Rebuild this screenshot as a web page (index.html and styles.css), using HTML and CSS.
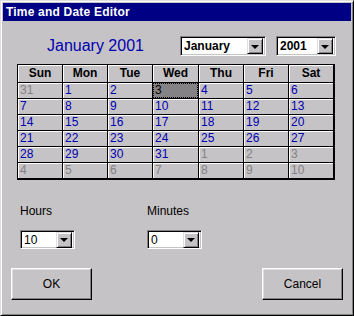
FILE: index.html
```html
<!DOCTYPE html>
<html>
<head>
<meta charset="utf-8">
<link rel="stylesheet" href="styles.css">
</head>
<body>
<div class="window">
  <div class="titlebar">Time and Date Editor</div>
  <div class="content">
    <div class="head-row">
      <div class="heading">January 2001</div>
      <div class="combo combo-month bold"><span class="combo-text">January</span><span class="combo-btn"><span class="arrow"></span></span></div>
      <div class="combo combo-year bold"><span class="combo-text">2001</span><span class="combo-btn"><span class="arrow"></span></span></div>
    </div>
    <div class="calendar">
      <div class="cell hdr">Sun</div><div class="cell hdr">Mon</div><div class="cell hdr">Tue</div><div class="cell hdr">Wed</div><div class="cell hdr">Thu</div><div class="cell hdr">Fri</div><div class="cell hdr">Sat</div>
      <div class="cell other">31</div><div class="cell">1</div><div class="cell">2</div><div class="cell selected"><span class="focus">3</span></div><div class="cell">4</div><div class="cell">5</div><div class="cell">6</div>
      <div class="cell">7</div><div class="cell">8</div><div class="cell">9</div><div class="cell">10</div><div class="cell">11</div><div class="cell">12</div><div class="cell">13</div>
      <div class="cell">14</div><div class="cell">15</div><div class="cell">16</div><div class="cell">17</div><div class="cell">18</div><div class="cell">19</div><div class="cell">20</div>
      <div class="cell">21</div><div class="cell">22</div><div class="cell">23</div><div class="cell">24</div><div class="cell">25</div><div class="cell">26</div><div class="cell">27</div>
      <div class="cell">28</div><div class="cell">29</div><div class="cell">30</div><div class="cell">31</div><div class="cell other">1</div><div class="cell other">2</div><div class="cell other">3</div>
      <div class="cell other">4</div><div class="cell other">5</div><div class="cell other">6</div><div class="cell other">7</div><div class="cell other">8</div><div class="cell other">9</div><div class="cell other">10</div>
    </div>
    <div class="time-row">
      <div class="field field-hours">
        <div class="label">Hours</div>
        <div class="combo combo-small"><span class="combo-text">10</span><span class="combo-btn"><span class="arrow"></span></span></div>
      </div>
      <div class="field field-minutes">
        <div class="label">Minutes</div>
        <div class="combo combo-small"><span class="combo-text">0</span><span class="combo-btn"><span class="arrow"></span></span></div>
      </div>
    </div>
    <div class="button-row">
      <div class="button">OK</div>
      <div class="button">Cancel</div>
    </div>
  </div>
</div>
</body>
</html>
```
FILE: styles.css
```css
html, body {
  margin: 0;
  padding: 0;
  background: #c6c3c6;
}
body {
  font-family: "Liberation Sans", Arial, sans-serif;
  font-size: 11px;
  color: #000;
}
.window {
  width: 354px;
  height: 316px;
  box-sizing: border-box;
  background: #c6c3c6;
  border: 1px solid;
  border-color: #dedfde #000 #000 #dedfde;
  box-shadow: inset 1px 1px #fff, inset -1px -1px #848284;
  padding: 2px;
  display: flex;
  flex-direction: column;
}
.titlebar {
  height: 18px;
  background: #000084;
  color: #fff;
  font-weight: bold;
  font-size: 12px;
  line-height: 18px;
  padding-left: 3px;
  letter-spacing: 0.2px;
}
.content {
  display: flex;
  flex-direction: column;
  flex: 1;
}
.head-row {
  display: flex;
  align-items: center;
  margin-top: 15px;
  height: 20px;
}
.heading {
  flex: 0 0 177px;
  box-sizing: border-box;
  padding-left: 44px;
  font-size: 16px;
  color: #0000b0;
  line-height: 20px;
  white-space: nowrap;
}
.combo {
  display: flex;
  align-items: center;
  box-sizing: border-box;
  background: #fff;
  border: 1px solid;
  border-color: #848284 #fff #fff #848284;
  box-shadow: inset 1px 1px #000, inset -1px -1px #c6c3c6;
  padding: 2px;
  height: 20px;
  flex-shrink: 0;
}
.combo-month { width: 86px; }
.combo-year { width: 60px; margin-left: 10px; }
.bold { font-weight: bold; font-size: 12px; }
.combo-text {
  flex: 1;
  padding-left: 1px;
  line-height: 14px;
  overflow: hidden;
  white-space: nowrap;
}
.combo-btn {
  width: 16px;
  height: 16px;
  box-sizing: border-box;
  background: #c6c3c6;
  border: 1px solid;
  border-color: #dedfde #000 #000 #dedfde;
  box-shadow: inset 1px 1px #fff, inset -1px -1px #848284;
  display: flex;
  align-items: center;
  justify-content: center;
}
.arrow {
  width: 0;
  height: 0;
  border-left: 4px solid transparent;
  border-right: 4px solid transparent;
  border-top: 4px solid #000;
  margin-top: 1px;
}
.calendar {
  margin-top: 8px;
  margin-left: 14px;
  align-self: flex-start;
  display: grid;
  grid-template-columns: 44px 44px 44px 45px 44px 44px 44px;
  grid-template-rows: 17px repeat(6, 15px);
  gap: 1px;
  background: #000;
  padding: 1px 2px 2px 1px;
}
.cell {
  background: #c6c3c6;
  box-shadow: inset 1px 1px #fff;
  color: #0000b0;
  font-size: 12px;
  line-height: 15px;
  padding-left: 2px;
}
.cell.hdr {
  color: #000;
  font-weight: bold;
  text-align: center;
  padding-left: 0;
  line-height: 17px;
  font-size: 12px;
}
.cell.other { color: #848284; }
.cell.selected {
  background: #848284;
  box-shadow: none;
  color: #000;
  padding: 0;
  display: flex;
}
.focus {
  flex: 1;
  border: 1px dotted #000;
  padding-left: 1px;
  line-height: 13px;
}
.time-row {
  display: flex;
  margin-top: 24px;
  margin-left: 17px;
}
.field {
  display: flex;
  flex-direction: column;
}
.field-hours { width: 127px; }
.label {
  font-size: 12px;
  line-height: 14px;
  height: 14px;
  margin-bottom: 12px;
}
.combo-small { width: 55px; height: 19px; font-size: 12px; }
.button-row {
  display: flex;
  justify-content: space-between;
  margin-top: 19px;
  padding: 0 8px;
}
.button {
  width: 81px;
  height: 32px;
  box-sizing: border-box;
  border: 1px solid;
  border-color: #fff #000 #000 #fff;
  box-shadow: inset -1px -1px #848284, inset 1px 1px #dedfde;
  display: flex;
  align-items: center;
  justify-content: center;
  font-size: 12px;
}
```
